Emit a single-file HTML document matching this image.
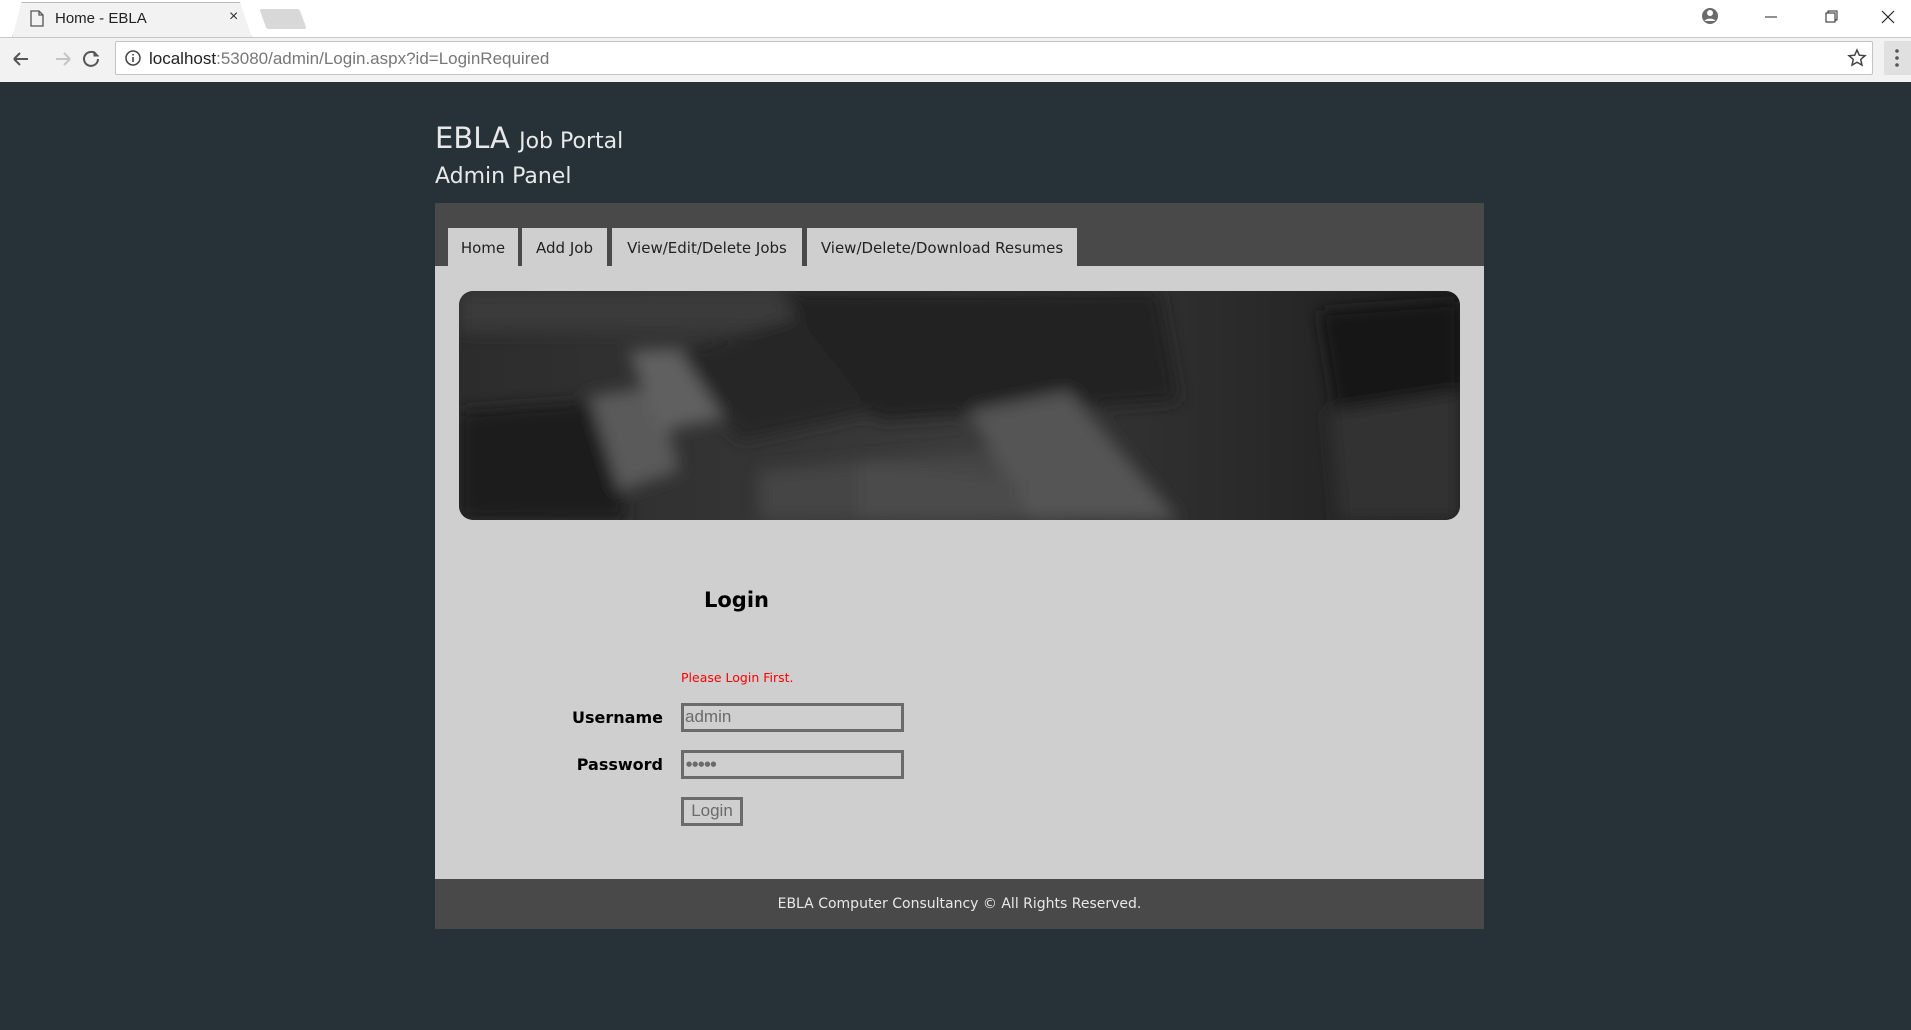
<!DOCTYPE html>
<html><head><meta charset="utf-8"><style>
*{margin:0;padding:0;box-sizing:border-box}
body{width:1911px;height:1030px;background:#263238;font-family:"DejaVu Sans","Liberation Sans",sans-serif;position:relative;overflow:hidden}
.abs{position:absolute}
#top{left:0;top:0;width:1911px;height:37px;background:#fff}
#tb{left:0;top:37px;width:1911px;height:45px;background:#f2f2f2;border-top:1px solid #c8c8c8}
#tab{left:12px;top:2px;width:240px;height:36px;background:#f2f2f2;border:1px solid #b8b8b8;border-bottom:none;clip-path:polygon(4% 0,95% 0,100% 100%,0 100%)}
#addr{left:115px;top:41px;width:1758px;height:34px;background:#fff;border:1px solid #c4c4c4;border-radius:2px;font-family:"Liberation Sans",sans-serif;font-size:17px;line-height:33px;padding-left:33px;color:#222}
.nav a{position:absolute;top:228px;height:38px;background:#cfcfcf;color:#222;font-size:15px;line-height:40px;text-align:center}
</style></head><body>
<div id="top" class="abs"></div>
<div id="tab" class="abs"></div>
<div class="abs" style="left:263px;top:9px;width:40px;height:20px;background:#d8d8d8;transform:skewX(20deg);border-radius:2px"></div>
<svg class="abs" style="left:30px;top:10px" width="14" height="17"><path d="M1 1h8l4 4v11H1z M9 1v4h4" fill="none" stroke="#555" stroke-width="1.3"/></svg>
<div class="abs" style="left:55px;top:10px;font-family:'Liberation Sans',sans-serif;font-size:15px;color:#222">Home - EBLA</div>
<div class="abs" style="left:229px;top:8px;font-size:16px;color:#333;font-family:'Liberation Sans',sans-serif">×</div>
<svg class="abs" style="left:1700px;top:6px" width="200" height="26"><circle cx="10" cy="10" r="8" fill="#6a6a6a"/><circle cx="10" cy="7" r="3" fill="#fff"/><path d="M4.5 15a6 4 0 0 1 11 0" fill="#fff"/><path d="M65 11h12" stroke="#222"/><path d="M126 7h9v9h-9z M128 7V5h9v9h-2" fill="none" stroke="#222"/><path d="M182 5l12 12M194 5l-12 12" stroke="#222" stroke-width="1.2"/></svg>
<div id="tb" class="abs"></div>
<svg class="abs" style="left:10px;top:48px" width="95" height="22"><path d="M4 11h14M4 11l6-6M4 11l6 6" stroke="#555" stroke-width="2" fill="none"/><path d="M46 11h14M60 11l-6-6M60 11l-6 6" stroke="#c4c4c4" stroke-width="2" fill="none"/><path d="M98 6a7 7 0 1 0 2 5" stroke="#555" stroke-width="2" fill="none" transform="translate(-12 0)"/><path d="M84 3v5h5" fill="#555" stroke="#555"/></svg>
<div id="addr" class="abs">localhost<span style="color:#777">:53080/admin/Login.aspx?id=LoginRequired</span></div>
<svg class="abs" style="left:124px;top:49px" width="18" height="18"><circle cx="9" cy="9" r="7" fill="none" stroke="#444" stroke-width="1.5"/><path d="M9 8v5M9 5v1.5" stroke="#444" stroke-width="1.6"/></svg>
<svg class="abs" style="left:1847px;top:48px" width="20" height="20"><path d="M10 2l2.3 5.2 5.7.5-4.3 3.8 1.3 5.6L10 14.2 5 17.1l1.3-5.6L2 7.7l5.7-.5z" fill="none" stroke="#444" stroke-width="1.5"/></svg>
<div class="abs" style="left:1884px;top:41px;width:27px;height:34px;background:#e0e0e0"></div>
<svg class="abs" style="left:1893px;top:48px" width="8" height="20"><circle cx="4" cy="3" r="1.8" fill="#555"/><circle cx="4" cy="10" r="1.8" fill="#555"/><circle cx="4" cy="17" r="1.8" fill="#555"/></svg>

<div class="abs" style="left:435px;top:121px;color:#e8e8e8;font-size:29px;white-space:nowrap">EBLA <span style="font-size:22px">Job Portal</span></div>
<div class="abs" style="left:435px;top:164px;color:#e8e8e8;font-size:22px">Admin Panel</div>
<div class="abs" style="left:435px;top:203px;width:1049px;height:63px;background:#494949"></div>
<div class="nav">
<a style="left:448px;width:70px">Home</a>
<a style="left:522px;width:85px">Add Job</a>
<a style="left:612px;width:190px">View/Edit/Delete Jobs</a>
<a style="left:807px;width:270px">View/Delete/Download Resumes</a>
</div>
<div class="abs" style="left:435px;top:266px;width:1049px;height:613px;background:#cfcfcf"></div>
<svg class="abs" style="left:459px;top:291px" width="1001" height="229">
<defs><clipPath id="c"><rect width="1001" height="229" rx="14"/></clipPath>
<linearGradient id="g" x1="0" y1="0" x2="1" y2="0"><stop offset="0" stop-color="#2c2c2c"/><stop offset=".5" stop-color="#3a3a3a"/><stop offset="1" stop-color="#1e1e1e"/></linearGradient>
<filter id="b"><feGaussianBlur stdDeviation="8"/></filter></defs>
<g clip-path="url(#c)"><rect width="1001" height="229" fill="url(#g)"/>
<g filter="url(#b)">
<rect x="0" y="0" width="420" height="40" fill="#3a3a3a"/>
<path d="M0 120 L140 110 L170 229 L0 229z" fill="#1c1c1c"/>
<path d="M130 105 L200 95 L220 180 L160 200z" fill="#5a5a5a"/>
<path d="M170 60 L280 55 L300 120 L200 140z" fill="#606060"/>
<path d="M220 60 L360 20 L420 120 L280 150z" fill="#262626"/>
<path d="M320 0 L700 0 L720 110 L420 130z" fill="#222"/>
<path d="M300 180 L620 150 L700 229 L300 229z" fill="#444"/>
<path d="M510 120 L610 100 L720 229 L570 229z" fill="#555"/>
<path d="M400 170 L560 190 L560 229 L400 229z" fill="#4c4c4c"/>
<path d="M860 20 L1001 10 L1001 130 L880 140z" fill="#141414"/>
<path d="M870 120 L1001 100 L1001 229 L880 229z" fill="#303030"/>
</g></g></svg>
<div class="abs" style="left:704px;top:588px;font-size:21px;font-weight:bold;color:#000">Login</div>
<div class="abs" style="left:681px;top:670px;font-size:12.5px;color:#ff0000">Please Login First.</div>
<div class="abs" style="left:500px;top:708px;width:163px;text-align:right;font-size:16px;font-weight:bold;color:#000">Username</div>
<div class="abs" style="left:500px;top:755px;width:163px;text-align:right;font-size:16px;font-weight:bold;color:#000">Password</div>
<div class="abs" style="left:681px;top:703px;width:223px;height:29px;border:3px solid #6b6b6b;font-family:'Liberation Sans',sans-serif;font-size:17px;color:#6b6b6b;line-height:22px;padding-left:1px">admin</div>
<div class="abs" style="left:681px;top:750px;width:223px;height:29px;border:3px solid #6b6b6b;font-size:7px;color:#6b6b6b;line-height:22px;padding-left:2px">●●●●●</div>
<div class="abs" style="left:681px;top:797px;width:62px;height:29px;border:3px solid #6b6b6b;font-family:'Liberation Sans',sans-serif;font-size:17px;color:#6b6b6b;line-height:22px;text-align:center">Login</div>
<div class="abs" style="left:435px;top:879px;width:1049px;height:50px;background:#494949;color:#e8e8e8;font-size:14px;text-align:center;line-height:50px">EBLA Computer Consultancy © All Rights Reserved.</div>
</body></html>
